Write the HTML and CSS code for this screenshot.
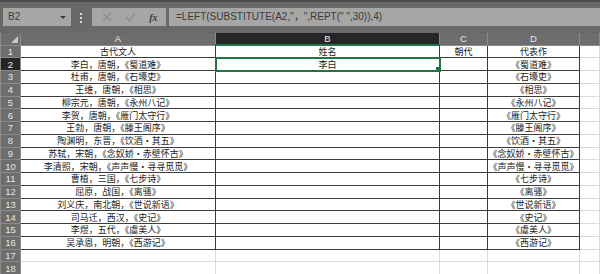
FILE: index.html
```html
<!DOCTYPE html>
<html lang="zh-CN">
<head>
	<meta charset="UTF-8">
	<title>古代文人</title>
	<link rel="stylesheet" href="styles.css">
</head>
<body>
	<div class="toolbar">
		<div class="namebox">B2<i class="caret"></i></div>
		<div class="grip"><i></i><i></i><i></i></div>
		<div class="btns">
			<svg width="10" height="10" viewBox="0 0 10 10"><path d="M1 1L9 9M9 1L1 9" stroke="#8c8c8c" stroke-width="1.2"/></svg>
			<svg width="11" height="10" viewBox="0 0 11 10"><path d="M1 5L4 8.5L10 1.5" fill="none" stroke="#8c8c8c" stroke-width="1.2"/></svg>
			<span class="fx">fx</span>
		</div>
		<div class="formula">=LEFT(SUBSTITUTE(A2,"，",REPT(" ",30)),4)</div>
	</div>

	<table class="sheet">
		<colgroup>
			<col style="width:20px">
			<col style="width:195px">
			<col style="width:224px">
			<col style="width:48px">
			<col style="width:92px">
			<col>
		</colgroup>
		<tr class="head">
			<th class="corner"><i></i></th><th>A</th><th class="cur">B</th><th>C</th><th>D</th><th></th>
		</tr>
		<tr class="d"><th>1</th><td>古代文人</td><td>姓名</td><td>朝代</td><td>代表作</td><td class="e"></td></tr>
		<tr class="d"><th class="cur">2</th><td>李白，唐朝，《蜀道难》</td><td class="active">李白</td><td></td><td>《蜀道难》</td><td class="e"></td></tr>
		<tr class="d"><th>3</th><td>杜甫，唐朝，《石壕吏》</td><td></td><td></td><td>《石壕吏》</td><td class="e"></td></tr>
		<tr class="d"><th>4</th><td>王维，唐朝，《相思》</td><td></td><td></td><td>《相思》</td><td class="e"></td></tr>
		<tr class="d"><th>5</th><td>柳宗元，唐朝，《永州八记》</td><td></td><td></td><td>《永州八记》</td><td class="e"></td></tr>
		<tr class="d"><th>6</th><td>李贺，唐朝，《雁门太守行》</td><td></td><td></td><td>《雁门太守行》</td><td class="e"></td></tr>
		<tr class="d"><th>7</th><td>王勃，唐朝，《滕王阁序》</td><td></td><td></td><td>《滕王阁序》</td><td class="e"></td></tr>
		<tr class="d"><th>8</th><td>陶渊明，东晋，《饮酒·其五》</td><td></td><td></td><td>《饮酒·其五》</td><td class="e"></td></tr>
		<tr class="d"><th>9</th><td>苏轼，宋朝，《念奴娇·赤壁怀古》</td><td></td><td></td><td>《念奴娇·赤壁怀古》</td><td class="e"></td></tr>
		<tr class="d"><th>10</th><td>李清照，宋朝，《声声慢·寻寻觅觅》</td><td></td><td></td><td>《声声慢·寻寻觅觅》</td><td class="e"></td></tr>
		<tr class="d"><th>11</th><td>曹植，三国，《七步诗》</td><td></td><td></td><td>《七步诗》</td><td class="e"></td></tr>
		<tr class="d"><th>12</th><td>屈原，战国，《离骚》</td><td></td><td></td><td>《离骚》</td><td class="e"></td></tr>
		<tr class="d"><th>13</th><td>刘义庆，南北朝，《世说新语》</td><td></td><td></td><td>《世说新语》</td><td class="e"></td></tr>
		<tr class="d"><th>14</th><td>司马迁，西汉，《史记》</td><td></td><td></td><td>《史记》</td><td class="e"></td></tr>
		<tr class="d"><th>15</th><td>李煜，五代，《虞美人》</td><td></td><td></td><td>《虞美人》</td><td class="e"></td></tr>
		<tr class="d"><th>16</th><td>吴承恩，明朝，《西游记》</td><td></td><td></td><td>《西游记》</td><td class="e"></td></tr>
		<tr><th>17</th><td></td><td></td><td></td><td></td><td></td></tr>
		<tr><th>18</th><td></td><td></td><td></td><td></td><td></td></tr>
	</table>
</body>
</html>
```

FILE: styles.css
```css
* {
	margin: 0;
	padding: 0;
	box-sizing: border-box;
}
body {
	width: 600px;
	height: 274px;
	overflow: hidden;
	background-color: #fff;
	font-family: "Noto Sans CJK SC", "Liberation Sans", sans-serif;
}
.toolbar {
	display: flex;
	align-items: flex-start;
	height: 33px;
	padding: 6px 0 0 3px;
	border-top: 2px solid #4b4b4b;
	background-color: #696969;
}
.namebox {
	position: relative;
	width: 68px;
	height: 18px;
	padding-left: 5px;
	background-color: #a6a6a6;
	font-family: "Liberation Sans", sans-serif;
	font-size: 10px;
	line-height: 18px;
	color: #404040;
}
.namebox .caret {
	position: absolute;
	right: 5px;
	top: 8px;
	border-left: 3px solid transparent;
	border-right: 3px solid transparent;
	border-top: 3px solid #3c3c3c;
}
.grip {
	display: flex;
	flex-direction: column;
	gap: 2px;
	width: 21px;
	padding: 5px 0 0 9px;
}
.grip i {
	width: 2px;
	height: 2px;
	background-color: #d8d8d8;
}
.btns {
	display: flex;
	align-items: center;
	justify-content: space-around;
	width: 74px;
	height: 18px;
	padding: 0 2px 0 4px;
	background-color: #a6a6a6;
}
.btns .fx {
	font-family: "Liberation Serif", serif;
	font-style: italic;
	font-weight: bold;
	font-size: 10px;
	color: #3a3a3a;
}
.formula {
	flex: 1;
	height: 18px;
	margin-left: 3px;
	padding-left: 7px;
	background-color: #a6a6a6;
	font-family: "Liberation Sans", sans-serif;
	font-size: 10px;
	line-height: 18px;
	color: #3a3a3a;
	white-space: pre;
}
.sheet {
	width: 600px;
	table-layout: fixed;
	border-collapse: collapse;
}
.sheet th {
	height: 12.75px;
	padding: 0;
	background-color: #6d6d6d;
	border: 1px solid #8a8a8a;
	font-family: "Liberation Sans", sans-serif;
	font-weight: normal;
	font-size: 9.5px;
	line-height: 11px;
	color: #e6e6e6;
}
.sheet .head th {
	height: 12px;
	border-top: 0;
}
.sheet th.cur {
	background-color: #262626;
	color: #f0f0f0;
}
.sheet .head th.cur {
	border-bottom: 2px solid #217346;
}
.sheet .corner {
	position: relative;
}
.corner i {
	position: absolute;
	right: 2px;
	bottom: 2px;
	border-left: 7px solid transparent;
	border-bottom: 7px solid #c8c8c8;
}
.sheet td {
	height: 12.75px;
	padding: 0;
	border: 1px solid #dadada;
	font-size: 9px;
	line-height: 11px;
	text-align: center;
	color: #222;
	white-space: nowrap;
	overflow: hidden;
}
.sheet .d td {
	border-color: #3c3c3c;
}
.sheet .d td.e {
	border-color: #dadada;
}
.sheet td.active {
	position: relative;
	outline: 2px solid #217346;
	outline-offset: -1px;
}
.sheet td.active::after {
	content: '';
	position: absolute;
	right: -3px;
	bottom: -3px;
	width: 5px;
	height: 5px;
	background-color: #217346;
	border: 1px solid #fff;
}
```
